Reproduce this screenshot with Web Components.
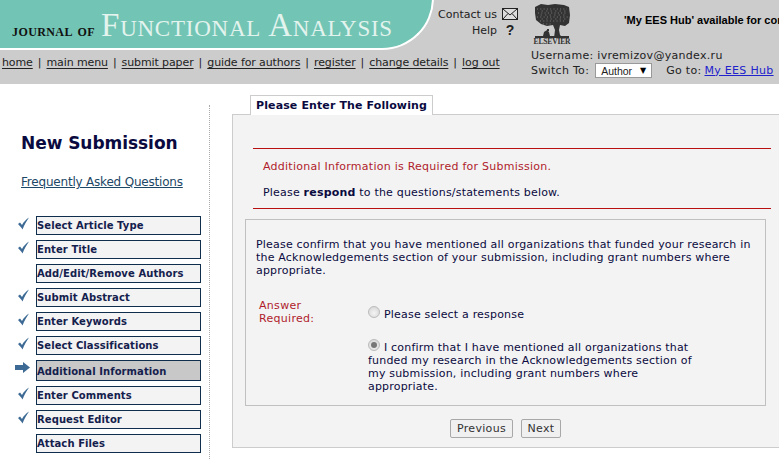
<!DOCTYPE html>
<html>
<head>
<meta charset="utf-8">
<title>New Submission</title>
<style>
html, body { margin: 0; padding: 0; overflow: hidden; background: #fff; }
body { width: 779px; height: 459px; font: 11px "DejaVu Sans", Verdana, sans-serif; color: #0a0a40; }
.content { display: flex; align-items: flex-start; }
</style>
</head>
<body>
<ees-header></ees-header>
<div class="content">
    <ees-sidebar>
        <ees-step status="done">Select Article Type</ees-step>
        <ees-step status="done">Enter Title</ees-step>
        <ees-step>Add/Edit/Remove Authors</ees-step>
        <ees-step status="done">Submit Abstract</ees-step>
        <ees-step status="done">Enter Keywords</ees-step>
        <ees-step status="done">Select Classifications</ees-step>
        <ees-step status="current">Additional Information</ees-step>
        <ees-step status="done">Enter Comments</ees-step>
        <ees-step status="done">Request Editor</ees-step>
        <ees-step>Attach Files</ees-step>
    </ees-sidebar>
    <ees-panel heading="Please Enter The Following">
        <ees-notice></ees-notice>
        <ees-question></ees-question>
        <ees-buttons></ees-buttons>
    </ees-panel>
</div>
<script>
const FONT = '"DejaVu Sans", Verdana, sans-serif';

class EesHeader extends HTMLElement {
    constructor() {
        super();
        this.attachShadow({ mode: 'open' });
    }

    connectedCallback() {
        const links = ['home', 'main menu', 'submit paper', 'guide for authors', 'register', 'change details', 'log out'];
        const nav = links.map(l => `<a href="#">${l}</a>`).join('<span class="sep">|</span>');
        this.shadowRoot.innerHTML = `
            <style>
                :host { display: flex; height: 84px; background: #cccccc; color: #222; font: 11px ${FONT}; overflow: hidden; }
                a { color: inherit; }
                .left { width: 435px; flex: none; }
                .banner {
                    box-sizing: border-box; width: 434px; height: 57px; margin-top: -7px; padding: 14px 0 0 12px;
                    background: #72c5b4; border: solid #fff; border-width: 0 2px 2px 0;
                    border-bottom-right-radius: 52px;
                    font-family: "Liberation Serif", serif; font-variant: small-caps; white-space: nowrap;
                }
                .journal { font-size: 17.5px; letter-spacing: .4px; color: #111; font-weight: bold; text-transform: lowercase; margin-right: 6px; }
                .name { font-size: 33px; color: #e3f3ee; letter-spacing: .75px; }
                nav { margin: 6px 0 0 2px; white-space: nowrap; }
                nav a { letter-spacing: -.11px; text-underline-offset: 2px; }
                .sep { margin: 0 5px; }
                .contact { width: 83px; flex: none; padding-top: 6px; }
                .row { display: flex; justify-content: flex-end; align-items: center; height: 16px; gap: 5px; white-space: nowrap; }
                .row svg { flex: none; }
                .q { width: 16px; text-align: center; font: bold 14px "Liberation Sans", sans-serif; }
                .right { padding: 4px 0 0 13px; flex: none; width: 248px; white-space: nowrap; letter-spacing: .3px; }
                .top { display: flex; height: 42px; }
                .logo { width: 36px; height: 42px; margin-left: 3px; display: flex; flex-direction: column; align-items: center; }
                .logo span { font: bold 7.6px/8px "Liberation Serif", serif; color: #333; letter-spacing: -.2px; }
                .hub { font: bold 11px "Liberation Sans", sans-serif; color: #000; margin: 10px 0 0 54px; letter-spacing: 0; }
                .user { line-height: 13px; margin-top: 3px; }
                .switch { display: flex; align-items: center; line-height: 13px; }
                .select { box-sizing: border-box; display: flex; justify-content: space-between; align-items: center; width: 57px; height: 15px; margin: 1px 0 0 6px; padding: 0 5px; background: #fff; border: 1px solid #999; font: 10.5px "Liberation Sans", sans-serif; color: #222; letter-spacing: 0; }
                .select i { font: 8px "DejaVu Sans", sans-serif; color: #000; }
                .goto { margin-left: 14px; }
                .goto a { color: #2222cc; margin-left: 3px; }
            </style>
            <div class="left">
                <div class="banner"><span class="journal">Journal of</span><span class="name">Functional Analysis</span></div>
                <nav>${nav}</nav>
            </div>
            <div class="contact">
                <div class="row">Contact us
                    <svg width="16" height="12" viewBox="0 0 16 12"><rect x=".5" y=".5" width="15" height="11" fill="#ddd" stroke="#222"/><path d="M1 1l7 6 7-6M1 11l5-5.500M15 11l-5-5.500" fill="none" stroke="#222"/></svg>
                </div>
                <div class="row">Help <span class="q">?</span></div>
            </div>
            <div class="right">
                <div class="top">
                    <div class="logo">
                        <svg width="36" height="34" viewBox="0 0 36 34">
                            <path d="M1 3l6-3 7 1 7-1 9 1 5 2 1 8-1 8-4 3-5-1-1 5 1 5 3 3H20l1-8-2-5-6 1-6-2-5-4-1-7z" fill="#333"/>
                            <path d="M3 5h30M4 9h29M3 13h31M6 17h26M9 20h8" stroke="#999" stroke-width=".7" stroke-dasharray="1 2.300" fill="none"/>
                            <path d="M5 7h27M4 11h29M5 15h28" stroke="#888" stroke-width=".6" stroke-dasharray="1.500 3" stroke-dashoffset="2" fill="none"/>
                            <path d="M1 34v-2h34v2z" fill="#333"/>
                            <path d="M9 32l1-4 3-2 2 2 1 4zM13 25h2v2h-2z" fill="#333"/>
                        </svg>
                        <span>ELSEVIER</span>
                    </div>
                    <div class="hub">'My EES Hub' available for con</div>
                </div>
                <div class="user">Username: ivremizov@yandex.ru</div>
                <div class="switch">Switch To:<div class="select">Author<i>▼</i></div><span class="goto">Go to:<a href="#">My EES Hub</a></span></div>
            </div>
        `;
    }
}

class EesSidebar extends HTMLElement {
    constructor() {
        super();
        this.attachShadow({ mode: 'open' });
    }

    connectedCallback() {
        this.shadowRoot.innerHTML = `
            <style>
                :host { display: block; box-sizing: border-box; flex: none; width: 210px; height: 354px; margin: 21px 22px 0 0; border-right: 1px dotted #aaa; font: 11px ${FONT}; }
                h1 { margin: 28px 0 0 21px; font: bold 17px/20px ${FONT}; color: #0a0a40; letter-spacing: -.05px; }
                .faq { display: block; margin: 21px 0 0 21px; font-size: 12px; line-height: 16px; letter-spacing: -.2px; color: #1c4766; }
                .steps { display: flex; flex-direction: column; gap: 5px; margin-top: 26px; }
            </style>
            <h1>New Submission</h1>
            <a class="faq" href="#">Frequently Asked Questions</a>
            <div class="steps"><slot></slot></div>
        `;
    }
}

class EesStep extends HTMLElement {
    constructor() {
        super();
        this.attachShadow({ mode: 'open' });
    }

    connectedCallback() {
        const status = this.getAttribute('status');
        let marker = '';
        if (status === 'done') {
            marker = '<svg width="13" height="13" viewBox="0 0 13 13"><path d="M1 7l2-1.500 2 2.500C6.500 5 9 2.500 12 .5 9.500 4 7.500 7.500 5.500 12.500 4 10 2.500 8.500 1 7z" fill="#3d6a94"/></svg>';
        } else if (status === 'current') {
            marker = '<svg width="15" height="12" viewBox="0 0 15 12"><path d="M0 3h8V0l7 5.500L8 11V8H0z" fill="#3d6a94"/></svg>';
        }
        const current = status === 'current';
        this.shadowRoot.innerHTML = `
            <style>
                :host { display: flex; margin-left: 15px; width: 186px; }
                .mark { width: 21px; flex: none; padding-left: ${current ? 0 : 2}px; box-sizing: border-box; margin-top: ${current ? 2 : 1}px; height: 13px; }
                .box {
                    box-sizing: border-box; flex: 1; height: ${current ? 21 : 19}px; padding: ${current ? 5 : 3}px 0 0 0;
                    background: ${current ? '#c8c8c8' : '#f3f3f3'}; border: 1px solid #0f2d4d;
                    font: bold 10px/12px ${FONT}; color: #14204d; letter-spacing: .08px; white-space: nowrap;
                }
            </style>
            <div class="mark">${marker}</div>
            <div class="box"><slot></slot></div>
        `;
    }
}

class EesPanel extends HTMLElement {
    constructor() {
        super();
        this.attachShadow({ mode: 'open' });
    }

    connectedCallback() {
        this.shadowRoot.innerHTML = `
            <style>
                :host { display: block; flex: none; width: 560px; margin-top: 11px; font: 11px ${FONT}; }
                .tab { box-sizing: border-box; display: inline-block; height: 20px; margin-left: 18px; padding: 3px 5px 0; background: #fff; border: 1px solid #ccc; border-bottom: 0; font: bold 11px/13px ${FONT}; color: #0a0a40; letter-spacing: .12px; position: relative; z-index: 1; vertical-align: top; }
                .body { box-sizing: border-box; height: 334px; margin-top: -1px; padding: 33px 0 0 12px; background: #f3f3f3; border: 1px solid #ccc; }
            </style>
            <div class="tab">${this.getAttribute('heading')}</div>
            <div class="body"><slot></slot></div>
        `;
    }
}

class EesNotice extends HTMLElement {
    constructor() {
        super();
        this.attachShadow({ mode: 'open' });
    }

    connectedCallback() {
        this.shadowRoot.innerHTML = `
            <style>
                :host { display: block; box-sizing: border-box; width: 518px; margin-left: 8px; height: 61px; padding: 11px 10px 0; border-top: 1px solid #b81010; border-bottom: 1px solid #b81010; color: #0a0a40; }
                p { margin: 0; line-height: 13px; letter-spacing: .2px; }
                .err { color: #b01c2c; margin-bottom: 13px; letter-spacing: .25px; }
            </style>
            <p class="err">Additional Information is Required for Submission.</p>
            <p>Please <b>respond</b> to the questions/statements below.</p>
        `;
    }
}

class EesQuestion extends HTMLElement {
    constructor() {
        super();
        this.attachShadow({ mode: 'open' });
    }

    connectedCallback() {
        this.shadowRoot.innerHTML = `
            <style>
                :host { display: block; box-sizing: border-box; width: 521px; height: 187px; margin-top: 10px; padding: 18px 10px 0; border: 1px solid #c0c0c0; color: #0a0a40; line-height: 13px; letter-spacing: .19px; }
                p { margin: 0; }
                .answer { display: flex; margin: 22px 0 0 3px; }
                .label { width: 109px; flex: none; color: #b01c2c; letter-spacing: .3px; }
                .opts { width: 325px; }
                .opt { display: block; }
                .first { margin: 7px 0 0; }
                .second { margin-top: 18px; }
                .radio { display: inline-block; box-sizing: border-box; width: 12px; height: 12px; margin: 0 4px 0 0; border-radius: 50%; border: 1px solid #bbb; background: radial-gradient(circle at 50% 60%, #f4f4f4, #d2d2d2); vertical-align: 0; position: relative; }
                .on::after { content: ""; position: absolute; left: 2px; top: 2px; width: 6px; height: 6px; border-radius: 50%; background: #777; }
            </style>
            <p>Please confirm that you have mentioned all organizations that funded your research in the Acknowledgements section of your submission, including grant numbers where appropriate.</p>
            <div class="answer">
                <div class="label">Answer<br>Required:</div>
                <div class="opts">
                    <label class="opt first"><span class="radio"></span>Please select a response</label>
                    <label class="opt second"><span class="radio on"></span>I confirm that I have mentioned all organizations that funded my research in the Acknowledgements section of my submission, including grant numbers where appropriate.</label>
                </div>
            </div>
        `;
    }
}

class EesButtons extends HTMLElement {
    constructor() {
        super();
        this.attachShadow({ mode: 'open' });
    }

    connectedCallback() {
        this.shadowRoot.innerHTML = `
            <style>
                :host { display: flex; gap: 8px; margin: 13px 0 0 205px; }
                button { box-sizing: border-box; height: 19px; padding: 0; background: #f0f0f0; border: 1px solid #a8a8a8; border-radius: 2px; font: 11px ${FONT}; color: #333; letter-spacing: .3px; }
                .prev { width: 63px; }
                .next { width: 40px; }
            </style>
            <button class="prev">Previous</button>
            <button class="next">Next</button>
        `;
    }
}

customElements.define('ees-header', EesHeader);
customElements.define('ees-sidebar', EesSidebar);
customElements.define('ees-step', EesStep);
customElements.define('ees-panel', EesPanel);
customElements.define('ees-notice', EesNotice);
customElements.define('ees-question', EesQuestion);
customElements.define('ees-buttons', EesButtons);
</script>
</body>
</html>
